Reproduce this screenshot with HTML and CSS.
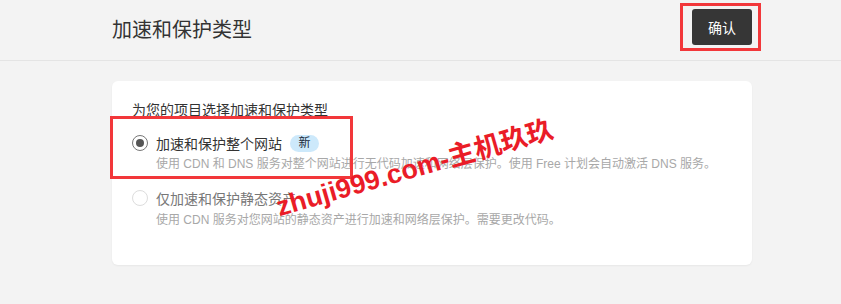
FILE: index.html
```html
<!DOCTYPE html>
<html lang="zh-CN">
<head>
    <meta charset="UTF-8">
    <meta name="viewport" content="width=device-width, initial-scale=1.0">
    <title>加速和保护类型</title>
    <link rel="stylesheet" href="styles.css">
</head>
<body>
    <div class="header">
        <h1>加速和保护类型</h1>
        <button class="confirm">确认</button>
    </div>

    <div class="card">
        <p class="question">为您的项目选择加速和保护类型</p>

        <div class="option">
            <span class="radio checked"></span>
            <span class="label">加速和保护整个网站</span>
            <span class="badge">新</span>
        </div>
        <p class="desc">使用 CDN 和 DNS 服务对整个网站进行无代码加速和网络层保护。使用 Free 计划会自动激活 DNS 服务。</p>

        <div class="option second">
            <span class="radio"></span>
            <span class="label muted">仅加速和保护静态资产</span>
        </div>
        <p class="desc">使用 CDN 服务对您网站的静态资产进行加速和网络层保护。需要更改代码。</p>
    </div>

    <!-- annotations on top of the screenshot -->
    <div class="mark mark-btn"></div>
    <div class="mark mark-opt"></div>
    <div class="watermark">zhuji999.com-主机玖玖</div>
</body>
</html>
```

FILE: styles.css
```css
body {
    font-family: "Liberation Sans", "Noto Sans CJK SC", sans-serif;
    margin: 0;
    padding: 0;
    background-color: #f3f3f3;
    color: #333;
    position: relative;
    height: 304px;
    overflow: hidden;
}
.header {
    height: 60px;
    border-bottom: 1px solid #e4e4e4;
    display: flex;
    align-items: center;
    justify-content: space-between;
    padding: 0 89px 0 112px;
}
.header h1 {
    margin: 0 0 4px 0;
    font-size: 20px;
    font-weight: 400;
    color: #333;
}
.confirm {
    width: 60px;
    height: 36px;
    margin-top: -6px;
    background-color: #363636;
    color: #fff;
    border: none;
    border-radius: 3px;
    font-family: inherit;
    font-size: 14px;
}
.card {
    margin: 20px 0 0 112px;
    width: 640px;
    box-sizing: border-box;
    height: 184px;
    padding: 19px 20px 0 20px;
    background-color: #fff;
    border-radius: 6px;
    box-shadow: 0 1px 2px rgba(0, 0, 0, 0.05);
}
.question {
    margin: 0;
    font-size: 14px;
    line-height: 20px;
}
.option {
    display: flex;
    align-items: center;
    height: 20px;
    margin-top: 13px;
}
.option.second {
    margin-top: 15px;
}
.radio {
    width: 14px;
    height: 14px;
    border: 1px solid #ddd;
    border-radius: 50%;
    margin-right: 8px;
    display: flex;
    align-items: center;
    justify-content: center;
}
.radio.checked {
    border-color: #777;
}
.radio.checked::after {
    content: "";
    width: 8px;
    height: 8px;
    border-radius: 50%;
    background-color: #555;
}
.label {
    font-size: 14px;
}
.label.muted {
    color: #777;
}
.badge {
    margin-left: 8px;
    width: 29px;
    height: 17px;
    line-height: 17px;
    text-align: center;
    border-radius: 9px;
    background-color: #cde9fb;
    color: #1a2b3c;
    font-size: 12px;
}
.desc {
    margin: 2px 0 0 24px;
    font-size: 12px;
    line-height: 18px;
    color: #a8a8a8;
}
.option.second + .desc {
    margin-top: 3px;
}
.mark {
    position: absolute;
    border: 3px solid #f2373a;
    box-sizing: border-box;
}
.mark-btn {
    left: 680px;
    top: 3px;
    width: 81px;
    height: 48px;
}
.mark-opt {
    left: 110px;
    top: 116px;
    width: 243px;
    height: 63px;
}
.watermark {
    position: absolute;
    left: 281px;
    top: 194px;
    font-family: "Liberation Sans", "Noto Sans CJK SC", sans-serif;
    font-weight: 700;
    font-size: 27px;
    line-height: 27px;
    color: #ea1c27;
    transform: rotate(-16deg);
    transform-origin: left bottom;
    white-space: nowrap;
}
```
